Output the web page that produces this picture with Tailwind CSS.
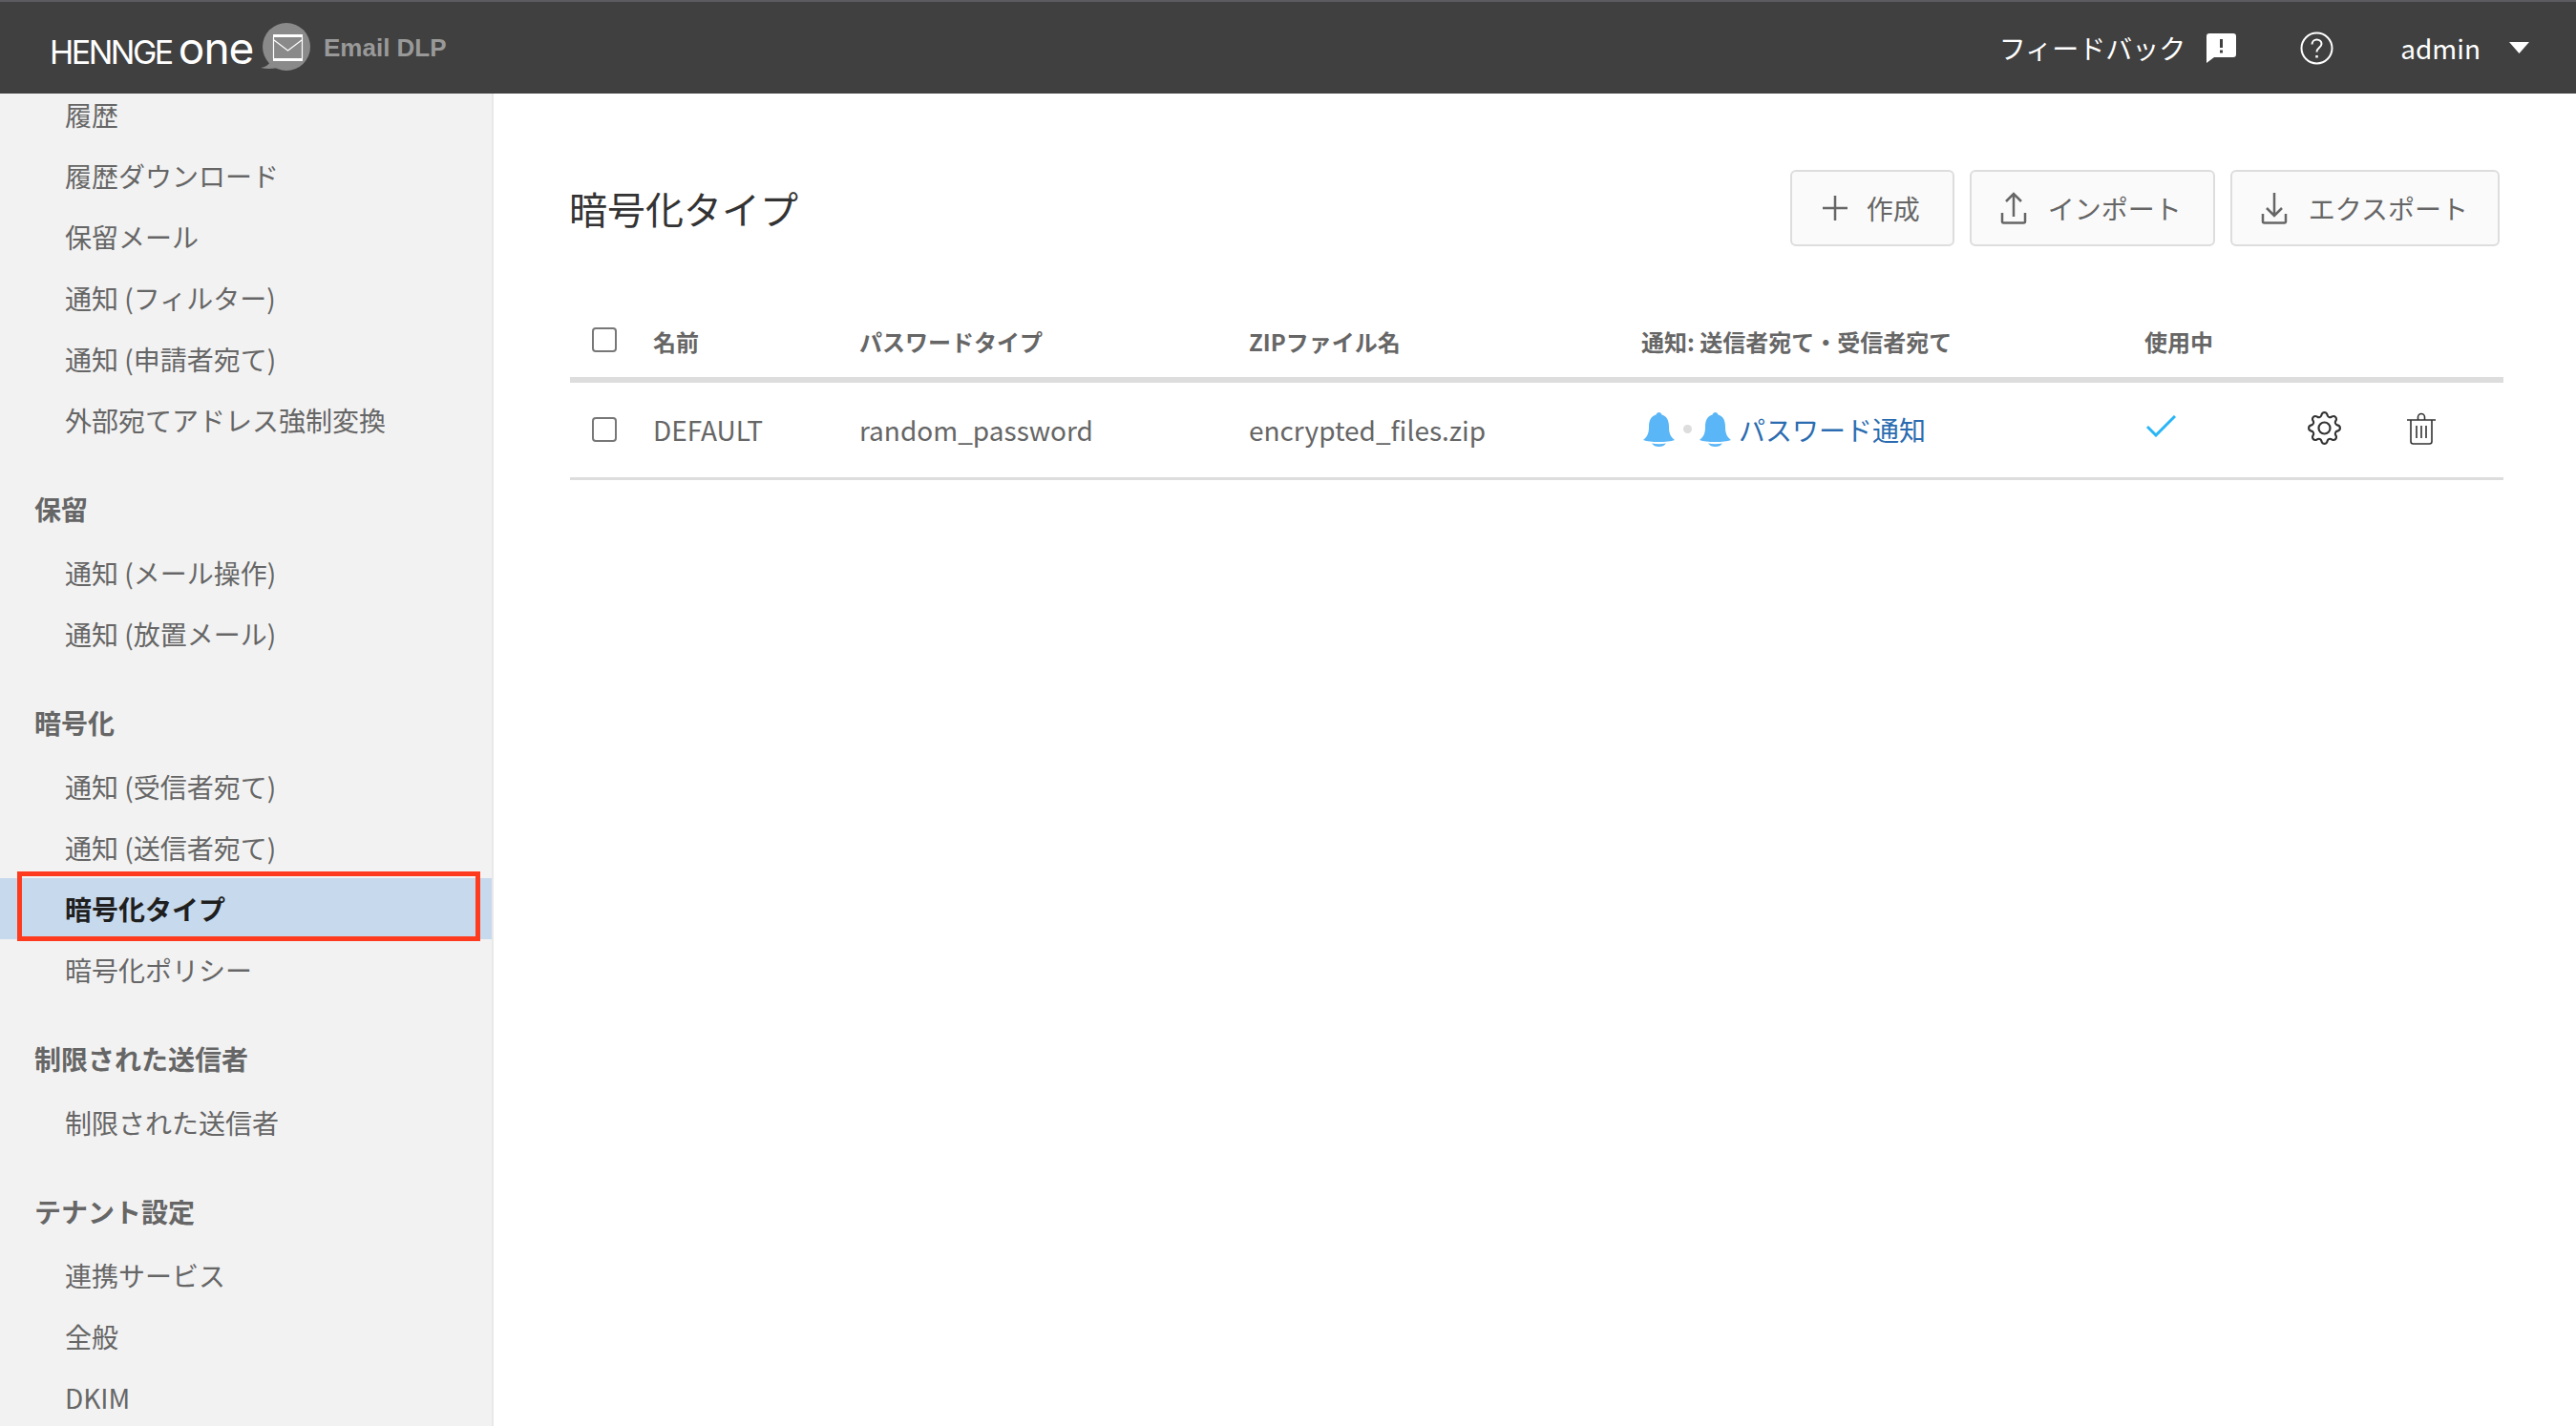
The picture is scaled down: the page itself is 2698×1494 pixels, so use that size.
<!DOCTYPE html>
<html lang="ja">
<head>
  <meta charset="UTF-8">
  <title>暗号化タイプ - Email DLP</title>
  <script src="https://cdn.jsdelivr.net/npm/@tailwindcss/browser@4"></script>
</head>
<body class="h-screen overflow-hidden bg-white text-[#666] text-[28px] font-['Noto_Sans_CJK_JP','Noto_Sans',sans-serif]">
  <!-- Header -->
  <header class="h-[98px] bg-[#404040] border-t-2 border-[#5c5c60] flex items-center justify-between pl-[52px] pr-[49px]">
    <div class="flex items-center">
      <span class="w-[219px] text-white font-['Inter',sans-serif] leading-none text-[34px] tracking-[-2.5px] whitespace-nowrap">HENNGE <span class="text-[46px] tracking-[-1px]">one</span></span>
      <svg class="w-[54px] h-[52px]" viewBox="0 0 54 52">
        <circle cx="29" cy="25" r="25" fill="#8a8a8a"/>
        <path d="M2 47 Q9 46 12 41 L20 47 Q10 49 2 47z" fill="#8a8a8a"/>
        <path d="M15 13.500h31M15 38.500h31" stroke="#fff" stroke-width="3" fill="none"/>
        <path d="M15.500 15v22M45.500 15v22M16 18l14.500 11L45 18" stroke="#fff" stroke-width="1.200" fill="none"/>
      </svg>
      <span class="ml-[14px] text-[#999] font-['Liberation_Sans',sans-serif] font-bold text-[26px] leading-none">Email DLP</span>
    </div>
    <div class="flex items-center text-white">
      <span>フィードバック</span>
      <svg class="ml-[22px] w-[31px] h-[31px]" viewBox="0 0 31 31"><path fill-rule="evenodd" fill="#fff" d="M3 0h25a3 3 0 0 1 3 3v19a3 3 0 0 1-3 3H8l-8 6V3a3 3 0 0 1 3-3zM14 6v9h3V6zM14 17.500v3h3v-3z"/></svg>
      <svg class="ml-[67px] w-[35px] h-[35px]" viewBox="0 0 35 35" fill="none" stroke="#fff" stroke-width="2"><circle cx="17.500" cy="17.500" r="16"/><path d="M12.500 13.500c0-3 2.200-5 5-5s5 2 5 4.600c0 3.600-5 4-5 8.400"/><path d="M17.500 25v2.500" stroke-width="2.500"/></svg>
      <span class="ml-[70px]">admin</span>
      <svg class="ml-[30px] w-[21px] h-[12px]" viewBox="0 0 21 12"><path d="M0 0h21L10.500 12z" fill="#fff"/></svg>
    </div>
  </header>

  <div class="flex h-[1396px]">
    <!-- Sidebar -->
    <aside class="w-[517px] shrink-0 bg-[#f2f2f2] border-r-2 border-[#e8e8e8] overflow-hidden">
      <nav class="-mt-[10px]">
        <a class="h-[64px] flex items-center pl-[68px]">履歴</a>
        <a class="h-[64px] flex items-center pl-[68px]">履歴ダウンロード</a>
        <a class="h-[64px] flex items-center pl-[68px]">保留メール</a>
        <a class="h-[64px] flex items-center pl-[68px]">通知 (フィルター)</a>
        <a class="h-[64px] flex items-center pl-[68px]">通知 (申請者宛て)</a>
        <a class="h-[64px] flex items-center pl-[68px]">外部宛てアドレス強制変換</a>

        <h3 class="mt-[31px] mb-[5px] h-[60px] flex items-center pl-[36px] font-bold">保留</h3>
        <a class="h-[64px] flex items-center pl-[68px]">通知 (メール操作)</a>
        <a class="h-[64px] flex items-center pl-[68px]">通知 (放置メール)</a>

        <h3 class="mt-[31px] mb-[5px] h-[60px] flex items-center pl-[36px] font-bold">暗号化</h3>
        <a class="h-[64px] flex items-center pl-[68px]">通知 (受信者宛て)</a>
        <a class="h-[64px] flex items-center pl-[68px]">通知 (送信者宛て)</a>
        <a class="relative h-[64px] flex items-center pl-[68px] bg-[#c7d9ec] text-[#1f1f1f] font-bold">
          暗号化タイプ
          <span class="absolute left-[18px] -top-[7px] w-[485px] h-[73px] border-[5px] border-[#ff3b1f]"></span>
        </a>
        <a class="h-[64px] flex items-center pl-[68px]">暗号化ポリシー</a>

        <h3 class="mt-[31px] mb-[5px] h-[60px] flex items-center pl-[36px] font-bold">制限された送信者</h3>
        <a class="h-[64px] flex items-center pl-[68px]">制限された送信者</a>

        <h3 class="mt-[31px] mb-[5px] h-[60px] flex items-center pl-[36px] font-bold">テナント設定</h3>
        <a class="h-[64px] flex items-center pl-[68px]">連携サービス</a>
        <a class="h-[64px] flex items-center pl-[68px]">全般</a>
        <a class="h-[64px] flex items-center pl-[68px]">DKIM</a>
      </nav>
    </aside>

    <!-- Main -->
    <main class="flex-1 pl-[80px] pr-[76px] pt-[80px]">
      <div class="flex items-center justify-between pr-[4px]">
        <h1 class="-ml-[1px] text-[40px] text-[#333] leading-none">暗号化タイプ</h1>
        <div class="flex gap-[16px]">
          <button class="h-[80px] flex items-center pl-[31px] pr-[34px] gap-[19px] bg-[#fafafa] border-2 border-[#ddd] rounded-[6px]">
            <svg class="w-[28px] h-[28px]" viewBox="0 0 28 28" fill="none" stroke="#666" stroke-width="2.500"><path d="M14 1v26M1 14h26"/></svg>
            作成
          </button>
          <button class="h-[80px] flex items-center pl-[30px] pr-[33px] gap-[22px] bg-[#fafafa] border-2 border-[#ddd] rounded-[6px]">
            <svg class="w-[28px] h-[34px]" viewBox="0 0 28 34" fill="none" stroke="#666" stroke-width="2.500"><path d="M14 26V2M6 10l8-8 8 8M2 22v9a1.500 1.500 0 0 0 1.500 1.500h21a1.500 1.500 0 0 0 1.500-1.500v-9"/></svg>
            インポート
          </button>
          <button class="h-[80px] flex items-center pl-[30px] pr-[31px] gap-[22px] bg-[#fafafa] border-2 border-[#ddd] rounded-[6px]">
            <svg class="w-[28px] h-[34px]" viewBox="0 0 28 34" fill="none" stroke="#666" stroke-width="2.500"><path d="M14 1v24M6 17l8 8 8-8M2 23v8a1.500 1.500 0 0 0 1.500 1.500h21a1.500 1.500 0 0 0 1.500-1.500v-8"/></svg>
            エクスポート
          </button>
        </div>
      </div>

      <!-- Table -->
      <div class="mt-[65px]">
        <div class="grid grid-cols-[87px_216px_408px_411px_527px_171px_103px_1fr] h-[78px] pb-[3px] items-center border-b-[6px] border-[#ddd] text-[24px] font-bold box-border">
          <div class="pl-[23px] flex -mt-[3px]"><span class="w-[26px] h-[26px] border-2 border-[#777] rounded-[4px] bg-white"></span></div>
          <div>名前</div>
          <div>パスワードタイプ</div>
          <div>ZIPファイル名</div>
          <div>通知: 送信者宛て・受信者宛て</div>
          <div>使用中</div>
          <div></div>
          <div></div>
        </div>
        <div class="grid grid-cols-[87px_216px_408px_411px_527px_171px_103px_1fr] h-[102px] pb-[2px] items-center border-b-[3px] border-[#ddd]">
          <div class="pl-[23px] flex"><span class="w-[26px] h-[26px] border-2 border-[#777] rounded-[4px] bg-white"></span></div>
          <div>DEFAULT</div>
          <div>random_password</div>
          <div>encrypted_files.zip</div>
          <div class="flex items-center pl-[2px]">
            <svg class="w-[33px] h-[36px]" viewBox="0 0 33 36" fill="#5ab6f7"><path d="M16.500 0c1.500 0 2.500 1 3 2.500C25 4 27 9 27 15c0 6 1 10 6 14q-6 2-16.500 2T0 29c5-4 6-8 6-14C6 9 8 4 13.500 2.500 14 1 15 0 16.500 0z"/><path d="M9 32.500q7.500 1.500 15 0-2.500 3.500-7.500 3.500T9 32.500z"/></svg>
            <span class="ml-[9px] w-[9px] h-[9px] rounded-full bg-[#ddd]"></span>
            <svg class="ml-[8px] w-[33px] h-[36px]" viewBox="0 0 33 36" fill="#5ab6f7"><path d="M16.500 0c1.500 0 2.500 1 3 2.500C25 4 27 9 27 15c0 6 1 10 6 14q-6 2-16.500 2T0 29c5-4 6-8 6-14C6 9 8 4 13.500 2.500 14 1 15 0 16.500 0z"/><path d="M9 32.500q7.500 1.500 15 0-2.500 3.500-7.500 3.500T9 32.500z"/></svg>
            <span class="ml-[8px] text-[#2b6cb0]">パスワード通知</span>
          </div>
          <div class="pl-[2px]"><svg class="w-[31px] h-[23px] -mt-[6px]" viewBox="0 0 31 23" fill="none" stroke="#29b6f6" stroke-width="3"><path d="M1 12l9 9L30 1"/></svg></div>
          <div><svg class="w-[35px] h-[35px] -mt-[2px]" viewBox="0 0 16 16" fill="#333"><path d="M8 4.754a3.246 3.246 0 1 0 0 6.492 3.246 3.246 0 0 0 0-6.492zM5.754 8a2.246 2.246 0 1 1 4.492 0 2.246 2.246 0 0 1-4.492 0z"/><path d="M9.796 1.343c-.527-1.790-3.065-1.790-3.592 0l-.094.319a.873.873 0 0 1-1.255.52l-.292-.16c-1.640-.892-3.433.902-2.540 2.541l.159.292a.873.873 0 0 1-.52 1.255l-.319.094c-1.790.527-1.790 3.065 0 3.592l.319.094a.873.873 0 0 1 .52 1.255l-.16.292c-.892 1.640.901 3.434 2.541 2.540l.292-.159a.873.873 0 0 1 1.255.52l.094.319c.527 1.790 3.065 1.790 3.592 0l.094-.319a.873.873 0 0 1 1.255-.52l.292.16c1.640.893 3.434-.902 2.540-2.541l-.159-.292a.873.873 0 0 1 .52-1.255l.319-.094c1.790-.527 1.790-3.065 0-3.592l-.319-.094a.873.873 0 0 1-.52-1.255l.16-.292c.893-1.640-.902-3.433-2.541-2.540l-.292.159a.873.873 0 0 1-1.255-.52l-.094-.319zm-2.633.283c.246-.835 1.428-.835 1.674 0l.094.319a1.873 1.873 0 0 0 2.693 1.115l.291-.16c.764-.415 1.600.42 1.184 1.185l-.159.292a1.873 1.873 0 0 0 1.116 2.692l.318.094c.835.246.835 1.428 0 1.674l-.319.094a1.873 1.873 0 0 0-1.115 2.693l.16.291c.415.764-.42 1.600-1.185 1.184l-.291-.159a1.873 1.873 0 0 0-2.693 1.116l-.094.318c-.246.835-1.428.835-1.674 0l-.094-.319a1.873 1.873 0 0 0-2.692-1.115l-.292.16c-.764.415-1.600-.42-1.184-1.185l.159-.291A1.873 1.873 0 0 0 1.945 8.930l-.319-.094c-.835-.246-.835-1.428 0-1.674l.319-.094A1.873 1.873 0 0 0 3.060 4.377l-.16-.292c-.415-.764.42-1.600 1.185-1.184l.292.159a1.873 1.873 0 0 0 2.692-1.115l.094-.319z"/></svg></div>
          <div><svg class="w-[32px] h-[34px] -mt-[2px]" viewBox="0 0 32 34" fill="none" stroke="#333" stroke-width="1.600"><path d="M1 8h30M12.500 8V5a3.500 3.500 0 0 1 7 0v3M5 8v22.500a2.500 2.500 0 0 0 2.500 2.500h17a2.500 2.500 0 0 0 2.500-2.500V8M11 14v13M16 14v13M21 14v13"/></svg></div>
        </div>
      </div>
    </main>
  </div>
</body>
</html>
